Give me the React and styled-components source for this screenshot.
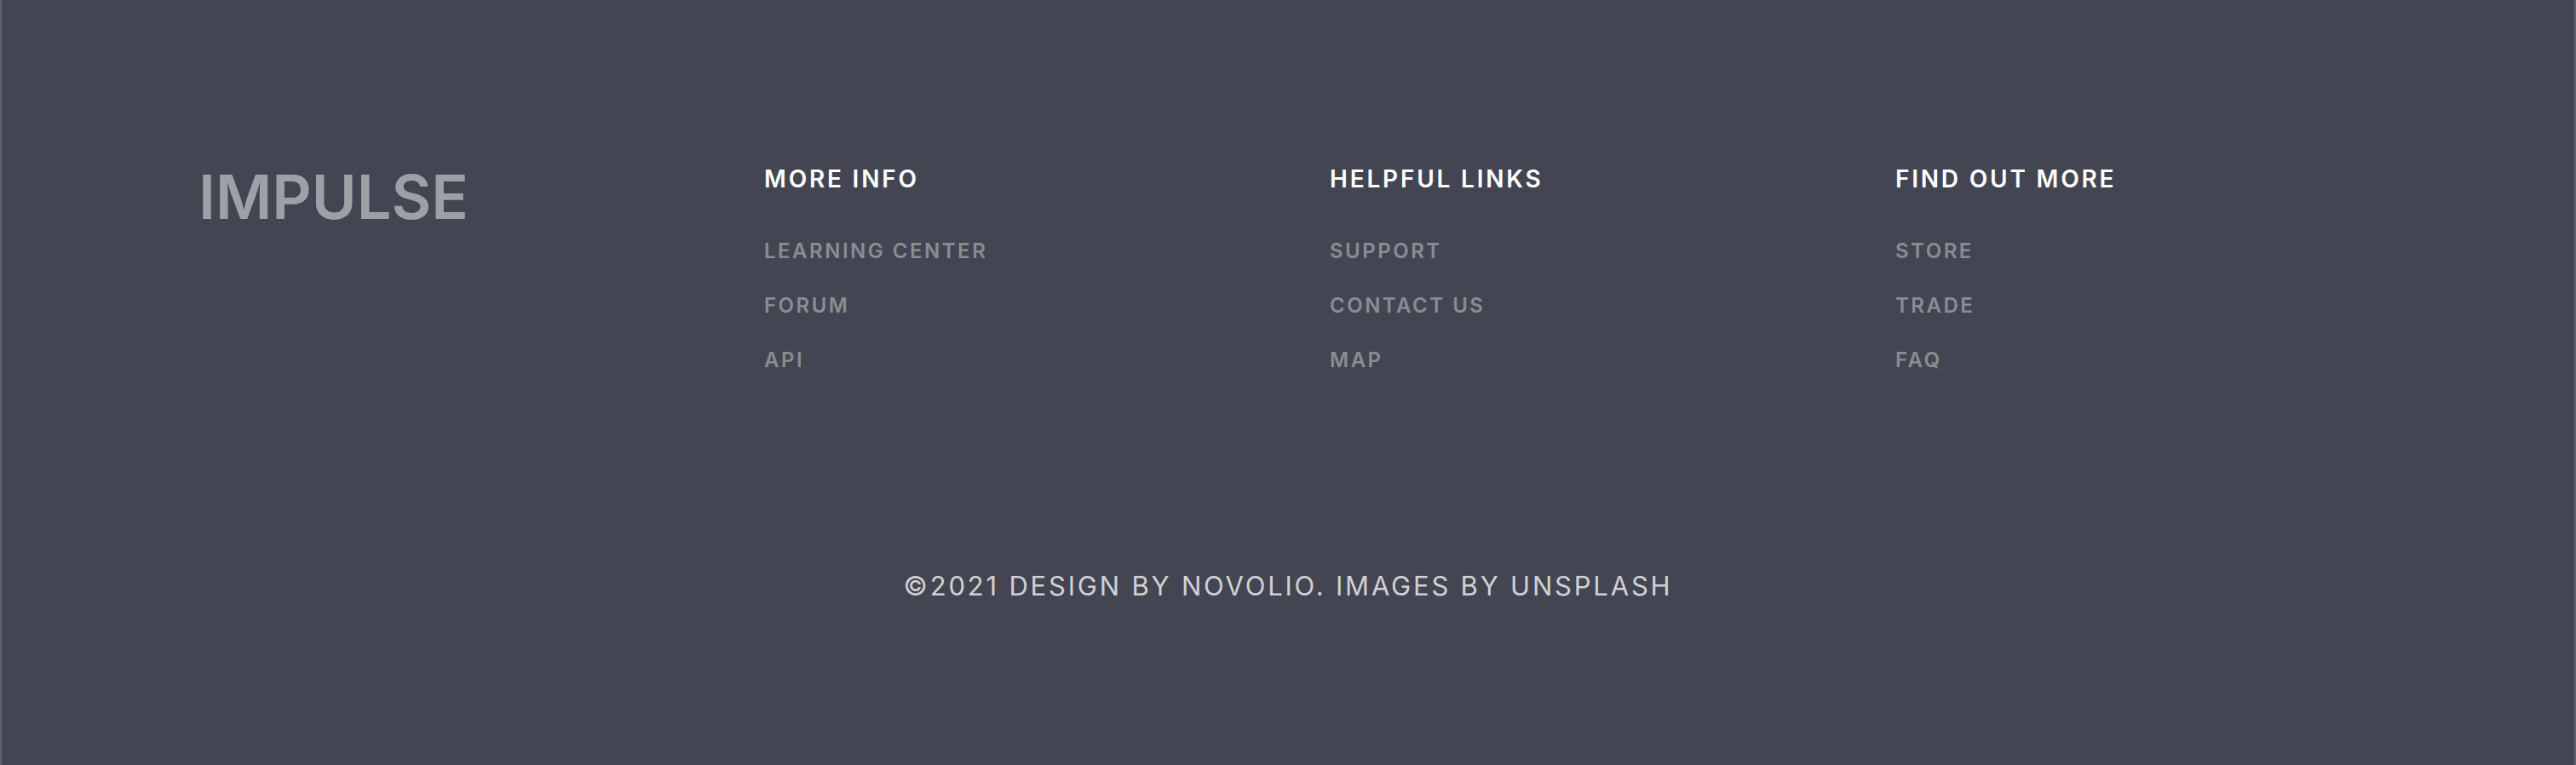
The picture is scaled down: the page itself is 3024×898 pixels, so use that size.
import React from "react";
import styled, { createGlobalStyle } from "styled-components";

const GlobalStyle = createGlobalStyle`
  html, body {
    margin: 0;
    padding: 0;
    background: #434652;
  }
  body {
    font-family: Inter, "Liberation Sans", sans-serif;
  }
`;

const columns = [
  {
    title: "MORE INFO",
    links: ["LEARNING CENTER", "FORUM", "API"],
  },
  {
    title: "HELPFUL LINKS",
    links: ["SUPPORT", "CONTACT US", "MAP"],
  },
  {
    title: "FIND OUT MORE",
    links: ["STORE", "TRADE", "FAQ"],
  },
];

const App = () => {
  return (
    <>
      <GlobalStyle />
      <FooterContainer>
        <TopRow>
          <Logo>IMPULSE</Logo>
          {columns.map((col) => (
            <Column key={col.title}>
              <ColumnTitle>{col.title}</ColumnTitle>
              <LinkList>
                {col.links.map((link) => (
                  <LinkItem key={link} href="#">
                    {link}
                  </LinkItem>
                ))}
              </LinkList>
            </Column>
          ))}
        </TopRow>
        <Copyright>©2021 DESIGN BY NOVOLIO. IMAGES BY UNSPLASH</Copyright>
      </FooterContainer>
    </>
  );
};

const FooterContainer = styled.footer`
  box-sizing: border-box;
  height: 898px;
  background: #434652;
  border-left: 2px solid #62646f;
  border-right: 2px solid #62646f;
  padding-top: 194px;
  display: flex;
  flex-direction: column;
`;

const TopRow = styled.div`
  display: grid;
  grid-template-columns: repeat(4, 664px);
  padding-left: 231px;
`;

const Logo = styled.div`
  font-size: 72px;
  font-weight: 600;
  line-height: 1;
  color: #9fa0a7;
  margin-top: 1px;
`;

const Column = styled.div`
  display: flex;
  flex-direction: column;
  padding-top: 2px;
`;

const ColumnTitle = styled.h4`
  margin: 0;
  font-size: 28px;
  font-weight: 600;
  line-height: 1;
  letter-spacing: 2.8px;
  color: #ffffff;
`;

const LinkList = styled.div`
  display: flex;
  flex-direction: column;
  gap: 40px;
  margin-top: 59px;
`;

const LinkItem = styled.a`
  font-size: 24px;
  font-weight: 600;
  line-height: 1;
  letter-spacing: 2.5px;
  color: #8a8c94;
  text-decoration: none;
`;

const Copyright = styled.p`
  margin: 237px 0 0;
  text-align: center;
  font-size: 31px;
  font-weight: 400;
  line-height: 1;
  letter-spacing: 2.8px;
  color: #d0d1d5;
`;

export default App;
